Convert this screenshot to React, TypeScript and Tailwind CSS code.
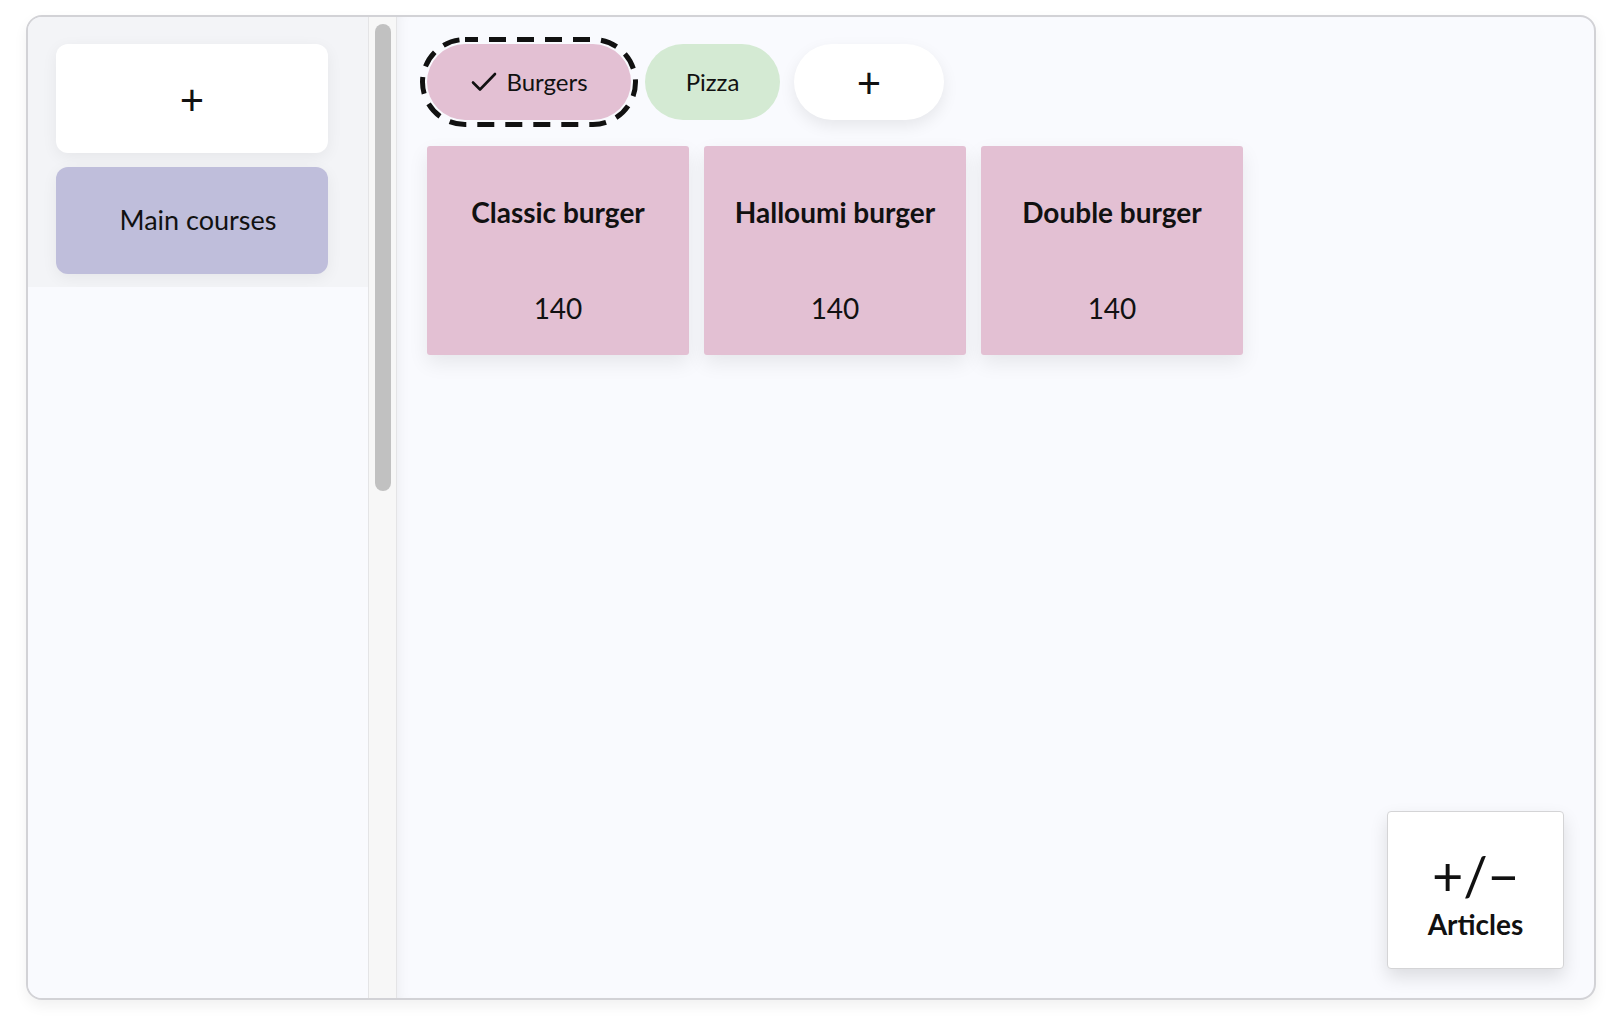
import React from "react";

const items = [
  { name: "Classic burger", price: 140 },
  { name: "Halloumi burger", price: 140 },
  { name: "Double burger", price: 140 },
];

// Écran de caisse : catégories à gauche, sous-catégories et articles à droite.
export default function App() {
  return (
    <div
      className="h-[1019px] w-[1616px] bg-white pl-[26px] pt-[15px] text-[#111]"
      style={{ fontFamily: "Lato, 'Noto Sans', sans-serif" }}
    >
      <div className="flex h-[985px] w-[1570px] overflow-hidden rounded-2xl border-2 border-[#d2d2d6] bg-[#f9fafe] shadow-[0_6px_14px_rgba(0,0,0,0.06)]">
        {/* colonne des catégories */}
        <div className="flex w-[340px] flex-col">
          <div className="flex flex-col gap-[14px] bg-[#f3f4f7] px-[28px] pb-[13px] pt-[27px]">
            <button className="flex h-[109px] w-[272px] items-center justify-center rounded-[12px] bg-white text-[42px] leading-none shadow-[0_4px_16px_rgba(0,0,0,0.06)]">
              +
            </button>
            <button className="flex h-[107px] w-[272px] items-center justify-center rounded-[12px] bg-[#bfbedb] pl-3 text-[27px] shadow-[0_4px_16px_rgba(0,0,0,0.06)]">
              Main courses
            </button>
          </div>
          <div className="mr-[5px] flex-1 rounded-br-2xl bg-[#f9fafe]" />
        </div>

        {/* barre de défilement */}
        <div className="w-[29px] border-x border-[#e4e4e6] bg-[#f7f7f7] pt-[7px]">
          <div className="mx-auto h-[467px] w-4 rounded-full bg-[#c1c1c1]" />
        </div>

        {/* zone principale */}
        <div className="relative flex-1 pl-[30px] pt-[27px] shadow-[inset_10px_0_14px_-10px_rgba(0,0,0,0.07)]">
          <div className="flex gap-[14px]">
            <button className="relative flex h-[76px] w-[204px] items-center justify-center gap-2 rounded-full bg-[#e3c0d3] text-[24px]">
              <svg
                className="absolute -left-[7px] -top-[7px]"
                width="218"
                height="90"
                viewBox="0 0 218 90"
                fill="none"
              >
                <rect
                  x="2.5"
                  y="2.5"
                  width="213"
                  height="85"
                  rx="42.5"
                  stroke="#111"
                  strokeWidth="5"
                  strokeDasharray="17 11"
                  strokeDashoffset="4"
                />
              </svg>
              <svg width="28" height="24" viewBox="0 0 28 24" fill="none" stroke="#111" strokeWidth="2.6" strokeLinecap="round" strokeLinejoin="round">
                <path d="M3 12.5l7 7L25 4" />
              </svg>
              Burgers
            </button>
            <button className="flex h-[76px] w-[135px] items-center justify-center rounded-full bg-[#d4ead3] text-[24px]">
              Pizza
            </button>
            <button className="flex h-[76px] w-[150px] items-center justify-center rounded-full bg-white text-[42px] leading-none shadow-[0_6px_16px_rgba(0,0,0,0.08)]">
              +
            </button>
          </div>

          <div className="mt-[26px] flex gap-[15px]">
            {items.map((it) => (
              <div
                key={it.name}
                className="flex h-[209px] w-[262px] flex-col items-center rounded-[3px] bg-[#e3c0d3] pt-[50px] shadow-[0_8px_20px_rgba(0,0,0,0.08)]"
              >
                <div className="text-[28px] font-bold leading-[32px]">{it.name}</div>
                <div className="mt-[64px] text-[28px] leading-[32px]">{it.price}</div>
              </div>
            ))}
          </div>

          <button className="absolute bottom-[29px] right-[30px] flex h-[158px] w-[177px] flex-col items-center justify-center rounded-[4px] border border-[#d4d4d6] bg-white pt-[10px] shadow-[0_8px_18px_rgba(0,0,0,0.12)]">
            <span className="text-[54px] leading-[52px]">+/−</span>
            <span className="mt-[6px] text-[28px] font-bold leading-[32px]">Articles</span>
          </button>
        </div>
      </div>
    </div>
  );
}
